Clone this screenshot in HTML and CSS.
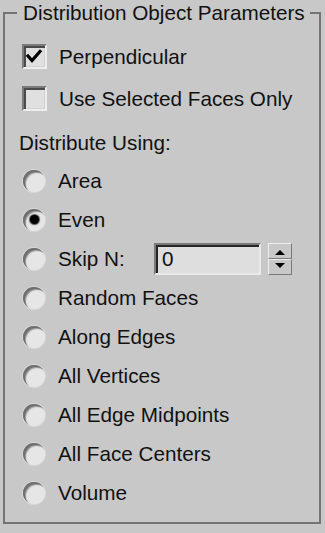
FILE: index.html
```html
<!DOCTYPE html>
<html>
<head>
<meta charset="utf-8">
<link rel="stylesheet" href="styles.css">
</head>
<body>
<fieldset class="group">
  <legend class="group-title">Distribution Object Parameters</legend>
  <div class="checks">
    <div class="row check-row">
      <span class="checkbox"><svg class="tick" width="21" height="21" viewBox="0 0 21 21"><polyline points="4,10 8,14.5 16,5.5" fill="none" stroke="#000" stroke-width="3.2" stroke-linecap="square"/></svg></span>
      <span class="label">Perpendicular</span>
    </div>
    <div class="row check-row">
      <span class="checkbox"></span>
      <span class="label">Use Selected Faces Only</span>
    </div>
  </div>
  <div class="section-label">Distribute Using:</div>
  <div class="radios">
    <div class="row radio-row"><span class="radio"></span><span class="label">Area</span></div>
    <div class="row radio-row"><span class="radio on"></span><span class="label">Even</span></div>
    <div class="row radio-row">
      <span class="radio"></span><span class="label skip-label">Skip N:</span>
      <span class="field">0</span>
      <span class="spinner"><span class="spin-btn"><span class="tri-up"></span></span><span class="spin-btn"><span class="tri-down"></span></span></span>
    </div>
    <div class="row radio-row"><span class="radio"></span><span class="label">Random Faces</span></div>
    <div class="row radio-row"><span class="radio"></span><span class="label">Along Edges</span></div>
    <div class="row radio-row"><span class="radio"></span><span class="label">All Vertices</span></div>
    <div class="row radio-row"><span class="radio"></span><span class="label">All Edge Midpoints</span></div>
    <div class="row radio-row"><span class="radio"></span><span class="label">All Face Centers</span></div>
    <div class="row radio-row"><span class="radio"></span><span class="label">Volume</span></div>
  </div>
</fieldset>
</body>
</html>
```

FILE: styles.css
```css
html, body {
  margin: 0;
  padding: 0;
  background: #c8c8c8;
  width: 325px;
  height: 533px;
  overflow: hidden;
}

body {
  font-family: "Liberation Sans", Arial, sans-serif;
  font-size: 20.7px;
  line-height: 24px;
  color: #111;
}

.group {
  box-sizing: border-box;
  margin: 1px 4px 0 3px;
  height: 523px;
  padding: 0;
  border: 2px solid #747474;
  min-width: 0;
}

.group-title {
  margin-left: 12px;
  padding: 0 5px 0 6px;
  line-height: 24px;
  height: 24px;
}

.checks {
  margin-top: 10px;
  padding-left: 17px;
}

.row {
  display: flex;
  align-items: center;
}

.check-row {
  height: 42px;
}

.checkbox {
  box-sizing: border-box;
  width: 25px;
  height: 25px;
  flex: none;
  border-style: solid;
  border-width: 2px;
  border-color: #7a7a7a #eeeeee #eeeeee #7a7a7a;
  background: #e0e0e0;
  box-shadow: inset 2px 2px 0 #4a4a4a, inset -1px -1px 0 #d2d2d2;
  display: flex;
  align-items: center;
  justify-content: center;
}

.tick {
  display: block;
}

.check-row .label {
  margin-left: 12px;
  padding-top: 2px;
}

.section-label {
  margin-top: 12px;
  padding-left: 14px;
  height: 24px;
}

.radios {
  margin-top: 6px;
  padding-left: 18px;
}

.radio-row {
  height: 39px;
}

.radio {
  box-sizing: border-box;
  width: 22px;
  height: 22px;
  flex: none;
  border-radius: 50%;
  background: #e6e6e6;
  box-shadow: inset 2px 2px 0 #6f6f6f, inset 3px 3px 1px #9a9a9a, 0 0 0 1px #d8d8d8;
  display: flex;
  align-items: center;
  justify-content: center;
}

.radio.on::after {
  content: "";
  width: 9px;
  height: 9px;
  border-radius: 50%;
  background: #000;
  box-shadow: 0 0 1px 1px #555;
}

.radio-row .label {
  margin-left: 13px;
}

.skip-label {
  width: 96px;
  flex: none;
}

.field {
  box-sizing: border-box;
  width: 107px;
  height: 32px;
  padding-left: 6px;
  border-style: solid;
  border-width: 2px;
  border-color: #7a7a7a #eaeaea #eaeaea #7a7a7a;
  background: #dedede;
  box-shadow: inset 2px 2px 0 #262626;
  line-height: 26px;
  padding-top: 1px;
}

.spinner {
  margin-left: 7px;
  width: 24px;
  height: 32px;
  display: flex;
  flex-direction: column;
}

.spin-btn {
  box-sizing: border-box;
  flex: 1;
  border-style: solid;
  border-width: 1px;
  border-color: #eeeeee #7a7a7a #7a7a7a #eeeeee;
  background: #c8c8c8;
  display: flex;
  align-items: center;
  justify-content: center;
}

.spin-btn:first-child {
  align-items: flex-end;
  padding-bottom: 3px;
}

.spin-btn:last-child {
  align-items: flex-start;
  padding-top: 3px;
}

.tri-up {
  width: 0;
  height: 0;
  border-left: 5px solid transparent;
  border-right: 5px solid transparent;
  border-bottom: 5px solid #000;
}

.tri-down {
  width: 0;
  height: 0;
  border-left: 5px solid transparent;
  border-right: 5px solid transparent;
  border-top: 5px solid #000;
}
```
